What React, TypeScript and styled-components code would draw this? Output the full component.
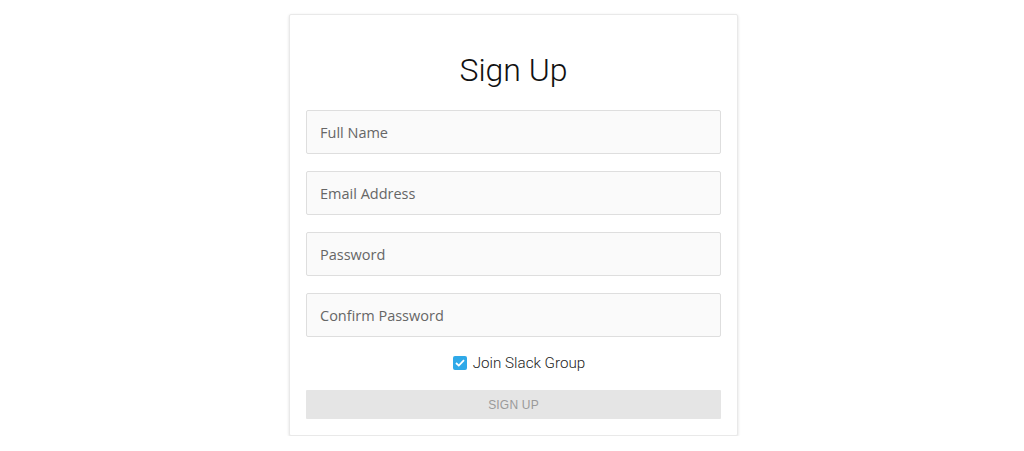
import React from "react";
import styled, { createGlobalStyle } from "styled-components";

const Global = createGlobalStyle`
  html, body { margin: 0; padding: 0; background: #fff; }
  body { font-family: "Open Sans", "Liberation Sans", sans-serif; }
  * { box-sizing: border-box; }
`;

const Page = styled.div`
  display: flex;
  justify-content: center;
  padding: 14px 0 0 3px;
`;

const Card = styled.form`
  width: 449px;
  background: #fff;
  border: 1px solid #e9e9e9;
  border-radius: 2px;
  box-shadow: 0 1px 3px rgba(0, 0, 0, 0.14);
  padding: 35px 16px 16px;
  display: flex;
  flex-direction: column;
`;

const Title = styled.h1`
  margin: 0 0 20px;
  height: 40px;
  line-height: 40px;
  text-align: center;
  font-family: Roboto, "Liberation Sans", sans-serif;
  font-weight: 300;
  font-size: 32px;
  color: #111;
`;

const Fields = styled.div`
  display: flex;
  flex-direction: column;
  gap: 17px;
`;

const Input = styled.input`
  height: 44px;
  width: 100%;
  border: 1px solid #dedede;
  border-radius: 2px;
  background: #fafafa;
  padding: 0 13px;
  font-family: "Open Sans", "Liberation Sans", sans-serif;
  font-size: 14.5px;
  color: #333;
  outline: none;
  &::placeholder { color: #666; }
`;

const CheckRow = styled.label`
  margin: 16px 0 17px;
  padding-left: 11px;
  height: 20px;
  display: flex;
  align-items: center;
  justify-content: center;
  gap: 6px;
  font-family: Roboto, "Liberation Sans", sans-serif;
  font-weight: 300;
  font-size: 15.2px;
  color: #222;
`;

const Box = styled.span`
  width: 14px;
  height: 14px;
  border-radius: 2px;
  background: #2fa9e8;
  display: flex;
  align-items: center;
  justify-content: center;
`;

const Button = styled.button`
  height: 29px;
  width: 100%;
  border: none;
  border-radius: 1px;
  background: #e5e5e5;
  color: #9a9a9a;
  font-family: "Liberation Sans", Arial, sans-serif;
  font-size: 12px;
  letter-spacing: 0.2px;
  text-transform: uppercase;
  padding: 0;
`;

export default function App() {
  return (
    <>
      <Global />
      <Page>
        <Card onSubmit={(e) => e.preventDefault()}>
          <Title>Sign Up</Title>
          <Fields>
            <Input placeholder="Full Name" />
            <Input placeholder="Email Address" />
            <Input placeholder="Password" type="password" />
            <Input placeholder="Confirm Password" type="password" />
          </Fields>
          <CheckRow>
            <Box>
              <svg width="10" height="8" viewBox="0 0 10 8">
                <path d="M1 4 L3.8 6.6 L9 1.2" fill="none" stroke="#fff" strokeWidth="1.8" />
              </svg>
            </Box>
            Join Slack Group
          </CheckRow>
          <Button type="button" disabled>Sign Up</Button>
        </Card>
      </Page>
    </>
  );
}
